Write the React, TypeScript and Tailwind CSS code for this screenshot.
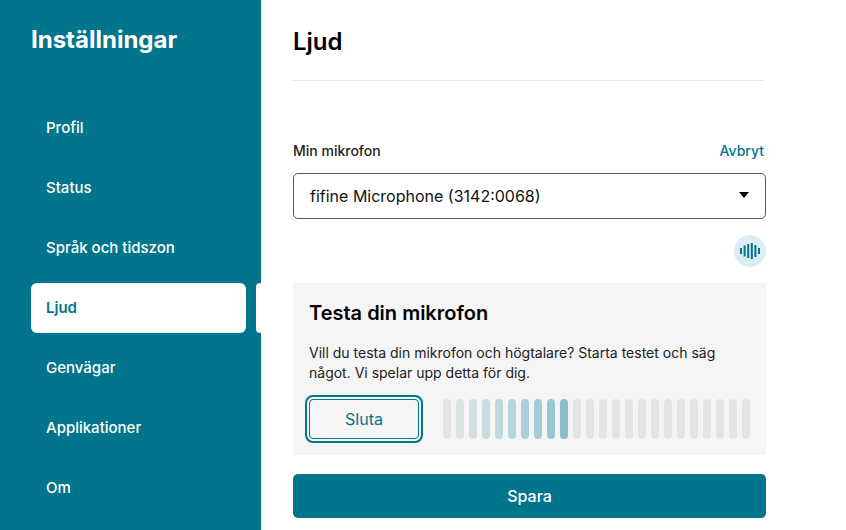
import React from 'react';

const menuItems = ['Profil', 'Status', 'Språk och tidszon', 'Ljud', 'Genvägar', 'Applikationer', 'Om'];

// opacity of the lit bars goes up from left to right
const levelBars = [
    'bg-[#e4e4e4]', 'bg-[#dde2e4]', 'bg-[#d3dfe1]', 'bg-[#cadcdf]', 'bg-[#c1d9dd]',
    'bg-[#b6d5da]', 'bg-[#abd0d7]', 'bg-[#a2cdd4]', 'bg-[#99c8d1]', 'bg-[#8abdc8]',
    ...Array(14).fill('bg-[#e4e4e4]'),
];

const Sidebar: React.FC = () => (
    <div className="w-[261px] h-full bg-[#00758c] pl-[31px] overflow-hidden shrink-0">
        <h1 className="text-white text-[24px] leading-[30px] font-bold pt-[25px] mb-[48px]">Inställningar</h1>
        <div className="flex flex-col gap-[10px]">
            {menuItems.map((item) => (
                <div key={item} className="flex gap-[10px] h-[50px]">
                    <div
                        className={
                            item === 'Ljud'
                                ? 'w-[215px] bg-white rounded-[6px] pl-[15px] flex items-center text-[15px] font-semibold text-[#00758c]'
                                : 'w-[215px] pl-[15px] flex items-center text-[15px] font-medium text-white'
                        }
                    >
                        {item}
                    </div>
                    {item === 'Ljud' && <div className="w-[5px] bg-white rounded-l-[4px]" />}
                </div>
            ))}
        </div>
    </div>
);

const WaveIcon: React.FC = () => (
    <svg width="20" height="18" viewBox="0 0 20 18" fill="none" stroke="#00758c" strokeWidth="2">
        <path d="M1 6v6M4.6 3.5v11M8.2 2v14M11.8 1v16M15.4 3v12M19 6v6" />
    </svg>
);

const App: React.FC = () => {
    return (
        <div className="flex w-[846px] h-[530px] bg-white overflow-hidden font-['Inter',sans-serif] text-[#111]">
            <Sidebar />
            <div className="w-[473px] ml-[32px]">
                <div className="w-[471px] h-[81px] border-b border-[#e6e6e6] pt-[27px]">
                    <h2 className="text-[24px] leading-[30px] font-semibold text-black">Ljud</h2>
                </div>
                <div className="flex justify-between w-[471px] mt-[59px] h-[20px] items-center">
                    <span className="text-[14px] font-medium text-[#222]">Min mikrofon</span>
                    <span className="text-[14px] font-medium text-[#00758c]">Avbryt</span>
                </div>
                <div className="mt-[13px] h-[46px] border border-[#4f5b6b] rounded-[5px] flex items-center justify-between pl-[16px] pr-[16px]">
                    <span className="text-[16px] text-[#111]">fifine Microphone (3142:0068)</span>
                    <span className="w-0 h-0 border-x-[5px] border-x-transparent border-t-[6px] border-t-black -mt-[2px]" />
                </div>
                <div className="flex justify-end mt-[16px]">
                    <div className="w-[32px] h-[32px] rounded-full bg-[#ddeef2] flex items-center justify-center">
                        <WaveIcon />
                    </div>
                </div>
                <div className="mt-[16px] h-[172px] bg-[#f5f5f5] pl-[16px] pr-[14px] pt-[17px]">
                    <h3 className="text-[20px] leading-[26px] font-semibold text-black">Testa din mikrofon</h3>
                    <p className="mt-[17px] text-[14px] leading-[20px] text-[#222]">
                        Vill du testa din mikrofon och högtalare? Starta testet och säg något. Vi spelar upp detta för dig.
                    </p>
                    <div className="flex items-center mt-[12px] -ml-[4px]">
                        <div className="w-[118px] h-[48px] rounded-[8px] border-2 border-[#00758c] p-[2px] mr-[20px] shrink-0">
                            <div className="w-full h-full rounded-[4px] border border-[#00758c] flex items-center justify-center text-[16px] text-[#00758c]">
                                Sluta
                            </div>
                        </div>
                        <div className="flex gap-[5px]">
                            {levelBars.map((color, i) => (
                                <div key={i} className={`w-[8px] h-[40px] rounded-full ${color}`} />
                            ))}
                        </div>
                    </div>
                </div>
                <div className="mt-[19px] h-[44px] rounded-[5px] bg-[#00758c] flex items-center justify-center text-[16px] font-medium text-white">
                    Spara
                </div>
            </div>
        </div>
    );
};

export default App;
